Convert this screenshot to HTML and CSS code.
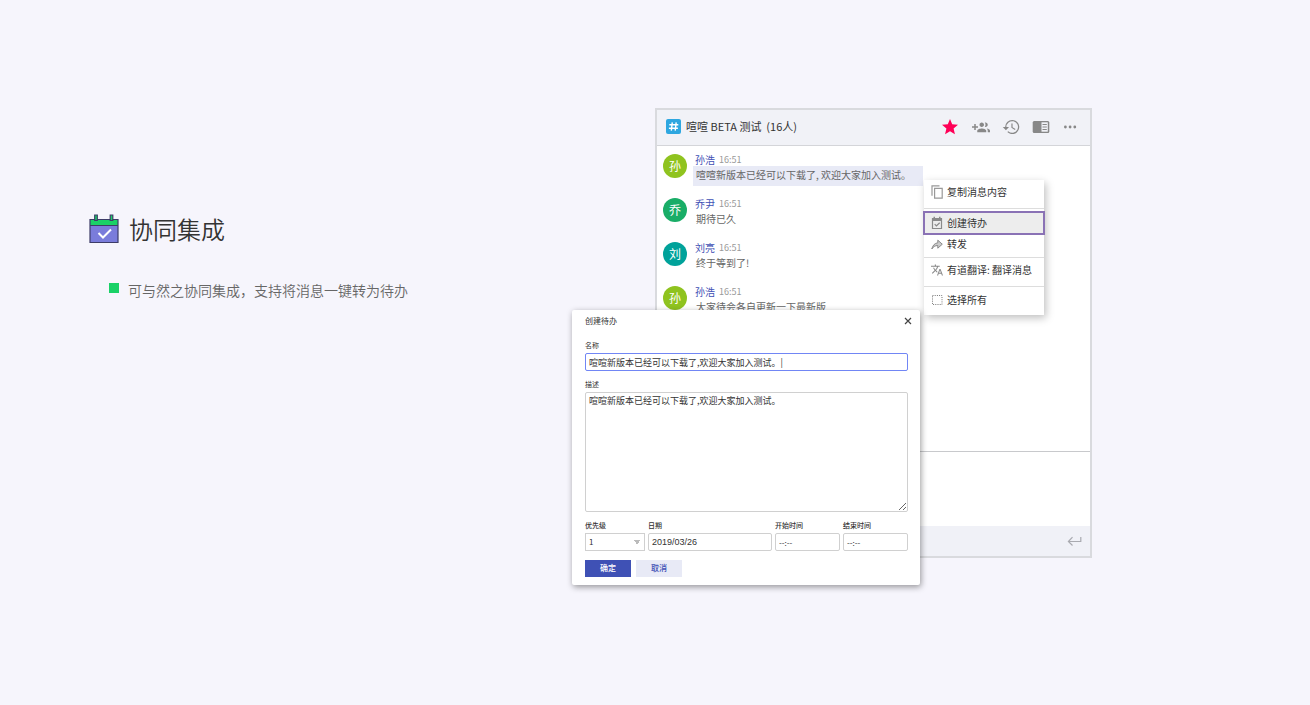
FILE: index.html
```html
<!DOCTYPE html>
<html lang="zh-CN">
<head>
<meta charset="utf-8">
<meta name="viewport" content="width=device-width, initial-scale=1">
<title>协同集成</title>
<link rel="stylesheet" href="styles.css">
</head>
<body>
<main class="page">
  <section class="feature">
    <div class="feature-head">
      <svg class="feature-icon" viewBox="0 0 30 30" aria-hidden="true">
        <path d="M1 10h28v18.500H1z" fill="#7a7cdb"/>
        <path d="M1 5.500h28v5.500H1z" fill="#1ad167"/>
        <path d="M1 5.500h28v23H1zM1 11.500h28" fill="none" stroke="#3d3c68" stroke-width="1.200"/>
        <path d="M5.700 1h2.600v5.500H5.700zM21.200 1h2.600v5.500h-2.600z" fill="#1ad167" stroke="#3d3c68" stroke-width="1.200"/>
        <path d="M9.500 19l4.500 4.500 8-8" fill="none" stroke="#fff" stroke-width="2"/>
      </svg>
      <h1>协同集成</h1>
    </div>
    <ul class="feature-list">
      <li>可与然之协同集成，支持将消息一键转为待办</li>
    </ul>
  </section>

  <section class="stage">
    <div class="chat">
      <header class="chat-head">
        <svg class="hash" viewBox="0 0 15 15" aria-hidden="true"><rect width="15" height="15" rx="2" fill="#2ea7e0"/><path d="M6.300 3.300l-1 8.400M10.200 3.300l-1 8.400M3.300 5.800h9M2.900 9.200h9" stroke="#fff" stroke-width="1.400" fill="none"/></svg>
        <h2>喧喧 BETA 测试 &nbsp;(16人)</h2>
        <div class="tools">
          <button type="button" aria-label="收藏"><svg viewBox="0 0 24 24"><path fill="#ff0057" d="M12 18.300L19.400 23l-2-8.600L24 8.700l-8.700-.8L12 0 8.700 7.900 0 8.700l6.600 5.700-2 8.600z"/></svg></button>
          <button type="button" aria-label="邀请"><svg class="wide" viewBox="0 4 24 14"><path fill="#888" d="M8 10H5V7H3v3H0v2h3v3h2v-3h3v-2zm10 1c1.660 0 2.990-1.340 2.990-3S19.660 5 18 5c-.32 0-.63.050-.91.140.57.810.9 1.790.9 2.860s-.34 2.040-.9 2.860c.28.090.59.140.91.140zm-5 0c1.660 0 2.990-1.340 2.990-3S14.660 5 13 5s-3 1.340-3 3 1.340 3 3 3zm6.620 2.160c.83.730 1.380 1.660 1.380 2.840v2h3v-2c0-1.540-2.370-2.490-4.380-2.840zM13 13c-2 0-6 1-6 3v2h12v-2c0-2-4-3-6-3z"/></svg></button>
          <button type="button" aria-label="历史"><svg class="wide" viewBox="0 2 23 20"><path fill="#888" d="M13 3a9 9 0 0 0-9 9H1l4 4 4-4H5.600A7.400 7.400 0 1 1 8 17.400L6.800 18.500A9 9 0 1 0 13 3zm-1 4.500V13l4.500 2.700.8-1.200-3.800-2.300V7.500z"/></svg></button>
          <button type="button" aria-label="侧栏"><svg class="wide" viewBox="0 0 18 14"><rect x=".7" y=".9" width="16.600" height="12.200" rx="1.500" fill="#888"/><path d="M9.500 2.300h6.300v9.400H9.500z" fill="#f1f2f7"/><path d="M10.500 4.500h4.300M10.500 7h4.300M10.500 9.500h4.300" stroke="#888"/></svg></button>
          <button type="button" aria-label="更多"><svg viewBox="0 0 16 16"><path fill="#888" d="M2 8a1.400 1.400 0 1 0 2.800 0A1.400 1.400 0 0 0 2 8zm4.700 0a1.400 1.400 0 1 0 2.800 0 1.400 1.400 0 0 0-2.800 0zm4.700 0a1.400 1.400 0 1 0 2.800 0 1.400 1.400 0 0 0-2.800 0z"/></svg></button>
        </div>
      </header>
      <div class="messages">
        <article class="message"><span class="avatar lime">孙</span><div class="bubble"><div class="meta"><b>孙浩</b><time>16:51</time></div><p class="selected">喧喧新版本已经可以下载了,&nbsp;欢迎大家加入测试。</p></div></article>
        <article class="message"><span class="avatar green">乔</span><div class="bubble"><div class="meta"><b>乔尹</b><time>16:51</time></div><p>期待已久</p></div></article>
        <article class="message"><span class="avatar teal">刘</span><div class="bubble"><div class="meta"><b>刘亮</b><time>16:51</time></div><p>终于等到了!</p></div></article>
        <article class="message"><span class="avatar lime">孙</span><div class="bubble"><div class="meta"><b>孙浩</b><time>16:51</time></div><p>大家待会各自更新一下最新版</p></div></article>
      </div>
      <div class="editor"></div>
      <footer class="chat-foot">
        <button type="button" aria-label="发送"><svg viewBox="0 0 14 10"><path d="M13.300 1v4.500H1M5 1.200L.9 5.500 5 9.500" fill="none" stroke="#a9aab0" stroke-width="1.200"/></svg></button>
      </footer>
    </div>

    <div class="menu" role="menu">
      <button type="button" role="menuitem"><svg viewBox="0 0 12 14"><path d="M8.500.8H1v10M3.600 3.400h7.600v9.800H3.600z" fill="none" stroke="#999" stroke-width="1.200"/></svg>复制消息内容</button>
      <hr>
      <button type="button" role="menuitem" class="active"><svg viewBox="0 0 12 14"><path d="M1.500 2.500h9v10h-9z" fill="none" stroke="#8a8a8a" stroke-width="1.200"/><path d="M1 2h10v3H1zM2.500.8h1.500V3H2.500zM8 .8h1.500V3H8z" fill="#8a8a8a"/><path d="M3.700 8.200l1.700 1.700L8.700 6.700" fill="none" stroke="#8a8a8a" stroke-width="1.200"/></svg>创建待办</button>
      <button type="button" role="menuitem" class="tight"><svg viewBox="0 0 12 14"><path d="M.8 12c.9-3.500 2.700-5.800 6-6.200V3.200l4.500 4-4.500 4V8.500C4 8.500 2.200 9.800.8 12z" fill="#ccc" stroke="#8a8a8a"/></svg>转发</button>
      <hr>
      <button type="button" role="menuitem"><svg viewBox="1 1 22 22"><path fill="#888" d="M12.870 15.070l-2.540-2.510.030-.030A17.520 17.520 0 0 0 14.070 6H17V4h-7V2H8v2H1v2h11.170C11.500 7.920 10.440 9.750 9 11.350 8.070 10.320 7.300 9.190 6.690 8h-2c.73 1.630 1.730 3.170 2.980 4.560l-5.090 5.020L4 19l5-5 3.110 3.110.76-2.040zM18.500 10h-2L12 22h2l1.120-3h4.750L21 22h2l-4.500-12zm-2.620 7l1.620-4.330L19.120 17h-3.240z"/></svg>有道翻译: 翻译消息</button>
      <hr>
      <button type="button" role="menuitem" class="last"><svg viewBox="0 0 12 14"><path d="M1.500 2.500h9.500v9H1.500z" fill="none" stroke="#777" stroke-dasharray="1 1.200"/></svg>选择所有</button>
    </div>

    <form class="dialog">
      <div class="dialog-head"><h3>创建待办</h3><button type="button" aria-label="关闭"><svg viewBox="0 0 8 8"><path d="M1 1l6 6M7 1L1 7" stroke="#444" stroke-width="1.200"/></svg></button></div>
      <div class="field"><label for="name">名称</label><input id="name" class="focused" type="text" value="喧喧新版本已经可以下载了,欢迎大家加入测试。|"></div>
      <div class="field"><label for="desc">描述</label><textarea id="desc">喧喧新版本已经可以下载了,欢迎大家加入测试。</textarea></div>
      <div class="row">
        <div class="field strong"><label for="level">优先级</label><select id="level"><option>1</option></select></div>
        <div class="field strong"><label for="date">日期</label><input id="date" class="date" type="text" value="2019/03/26"></div>
        <div class="field strong"><label for="start">开始时间</label><input id="start" type="text" value="--:--"></div>
        <div class="field strong"><label for="end">结束时间</label><input id="end" type="text" value="--:--"></div>
      </div>
      <div class="actions"><button type="button" class="primary">确定</button><button type="button">取消</button></div>
    </form>
  </section>
</main>
</body>
</html>
```
FILE: styles.css
```css
* { box-sizing: border-box; }
body {
  margin: 0;
  background: #f6f5fc;
  color: #333;
  font-family: "Noto Sans CJK SC", sans-serif;
}
h1, h2, h3, p, ul { margin: 0; padding: 0; font-weight: 400; }
button, input, select, textarea { font: inherit; color: inherit; }
button { border: 0; padding: 0; background: none; }
svg { display: block; flex: none; }

.page {
  display: grid;
  grid-template-columns: 483px minmax(0, 1fr);
  min-height: 100vh;
  padding: 108px 218px 108px 89px;
}

/* Feature copy */
.feature { padding-top: 103px; }
.feature-head { display: flex; align-items: center; gap: 10px; }
.feature-icon { width: 30px; height: 30px; }
.feature h1 { font-size: 24px; line-height: 36px; font-weight: 350; }
.feature-list { list-style: none; margin-top: 32px; padding-left: 20px; }
.feature-list li {
  display: flex;
  gap: 9px;
  font-size: 14px;
  line-height: 22px;
  font-weight: 350;
  color: #666;
}
.feature-list li::before { content: ""; width: 10px; height: 10px; margin-top: 4px; background: #1ad167; }

/* Chat window */
.stage { position: relative; padding-left: 83px; }
.chat { border: 2px solid #d9dade; background: #fff; }
.chat-head {
  display: flex;
  align-items: center;
  height: 36px;
  padding: 0 12px 2px 9px;
  background: #f1f2f7;
  border-bottom: 1px solid #d4d5d9;
}
.hash { width: 15px; height: 15px; }
.chat h2 { margin-left: 5px; padding-bottom: 2px; font-size: 11px; line-height: 16px; }
.tools { display: flex; align-items: center; gap: 14px; margin-left: auto; }
.tools button { display: grid; place-items: center; width: 16px; height: 18px; }
.tools svg { width: 16px; height: 16px; }
.tools .wide { width: 18px; height: 16px; }
.messages { display: grid; align-content: start; gap: 11px; height: 305px; padding: 7px 0 0 6px; }
.message { display: flex; gap: 6px; }
.avatar {
  width: 24px;
  height: 24px;
  margin-top: 1px;
  border-radius: 50%;
  color: #fff;
  font-size: 12px;
  line-height: 24px;
  text-align: center;
}
.lime { background: #8fc31f; }
.green { background: #19ad67; }
.teal { background: #00a29a; }
.meta { display: flex; gap: 4px; padding-left: 2px; font-size: 10px; line-height: 13px; color: #999; }
.meta b { font-weight: 400; color: #3f51b5; }
.meta time { font-size: 9px; }
.bubble p { height: 20px; padding: 0 12px 2px 3px; font-size: 10px; line-height: 18px; color: #666; }
.bubble .selected { background: #e8eaf6; }
.editor { height: 75px; border-top: 1px solid #c8c9cc; }
.chat-foot { display: flex; justify-content: flex-end; align-items: center; height: 30px; padding-right: 8px; background: #f0f1f7; }
.chat-foot svg { width: 15px; height: 10px; }

/* Context menu */
.menu {
  position: absolute;
  top: 72px;
  right: 48px;
  width: 120px;
  background: #fff;
  box-shadow: 2px 3px 8px rgba(0, 0, 0, 0.25);
}
.menu hr { height: 1px; margin: 0; border: 0; background: #ddd; }
.menu button {
  display: flex;
  align-items: center;
  gap: 4px;
  width: 100%;
  height: 28px;
  padding: 0 0 4px 7px;
  font-size: 10px;
  line-height: 16px;
  text-align: left;
}
.menu svg { width: 12px; height: 14px; }
.menu .active { height: 22px; margin-top: 3px; padding: 0 0 0 7px; background: #ededed; outline: 2px solid #8a72b5; outline-offset: -1px; }
.menu .tight { height: 23px; padding-bottom: 4px; }
.menu .last { padding-bottom: 2px; }

/* Todo dialog */
.dialog {
  position: absolute;
  top: 202px;
  left: 0;
  width: 348px;
  padding: 0 12px 8px 13px;
  border-radius: 2px;
  background: #fff;
  box-shadow: 1px 2px 6px rgba(0, 0, 0, 0.4);
}
.dialog-head { display: flex; align-items: center; justify-content: space-between; height: 22px; margin-right: -4px; }
.dialog h3 { font-size: 8px; line-height: 12px; }
.dialog-head svg { width: 8px; height: 8px; }
.field { display: grid; gap: 2px; margin-top: 7px; font-size: 9px; line-height: 14px; }
.field label { font-size: 7px; line-height: 12px; }
.strong label { font-weight: 500; }
.field input, .field select, .field textarea {
  display: block;
  width: 100%;
  min-width: 0;
  height: 18px;
  margin: 0;
  padding: 0 3px;
  border: 1px solid #d0d0d0;
  border-radius: 2px;
  background: #fff;
  outline: 0;
}
.field .focused { border-color: #7186f5; }
.field textarea { height: 120px; padding-top: 1px; resize: vertical; }
.row { display: grid; grid-template-columns: 60px minmax(0, 1fr) 65px 65px; gap: 3px; }
.row input, .row select { font-size: 8px; }
.row .date { font-family: "Liberation Sans", sans-serif; font-size: 9px; }
.row select {
  appearance: none;
  border-radius: 0;
  background: linear-gradient(to bottom right, #bbb 50%, transparent 50%) 51px 6px / 3px 5px no-repeat,
    linear-gradient(to bottom left, #bbb 50%, transparent 50%) 48px 6px / 3px 5px no-repeat, #fff;
}
.actions { display: flex; gap: 5px; margin-top: 9px; }
.actions button { width: 46px; height: 17px; padding-bottom: 1px; background: #e8eaf6; color: #3f51b5; font-size: 8px; line-height: 16px; font-weight: 500; }
.actions .primary { background: #3f51b5; color: #fff; }
```
